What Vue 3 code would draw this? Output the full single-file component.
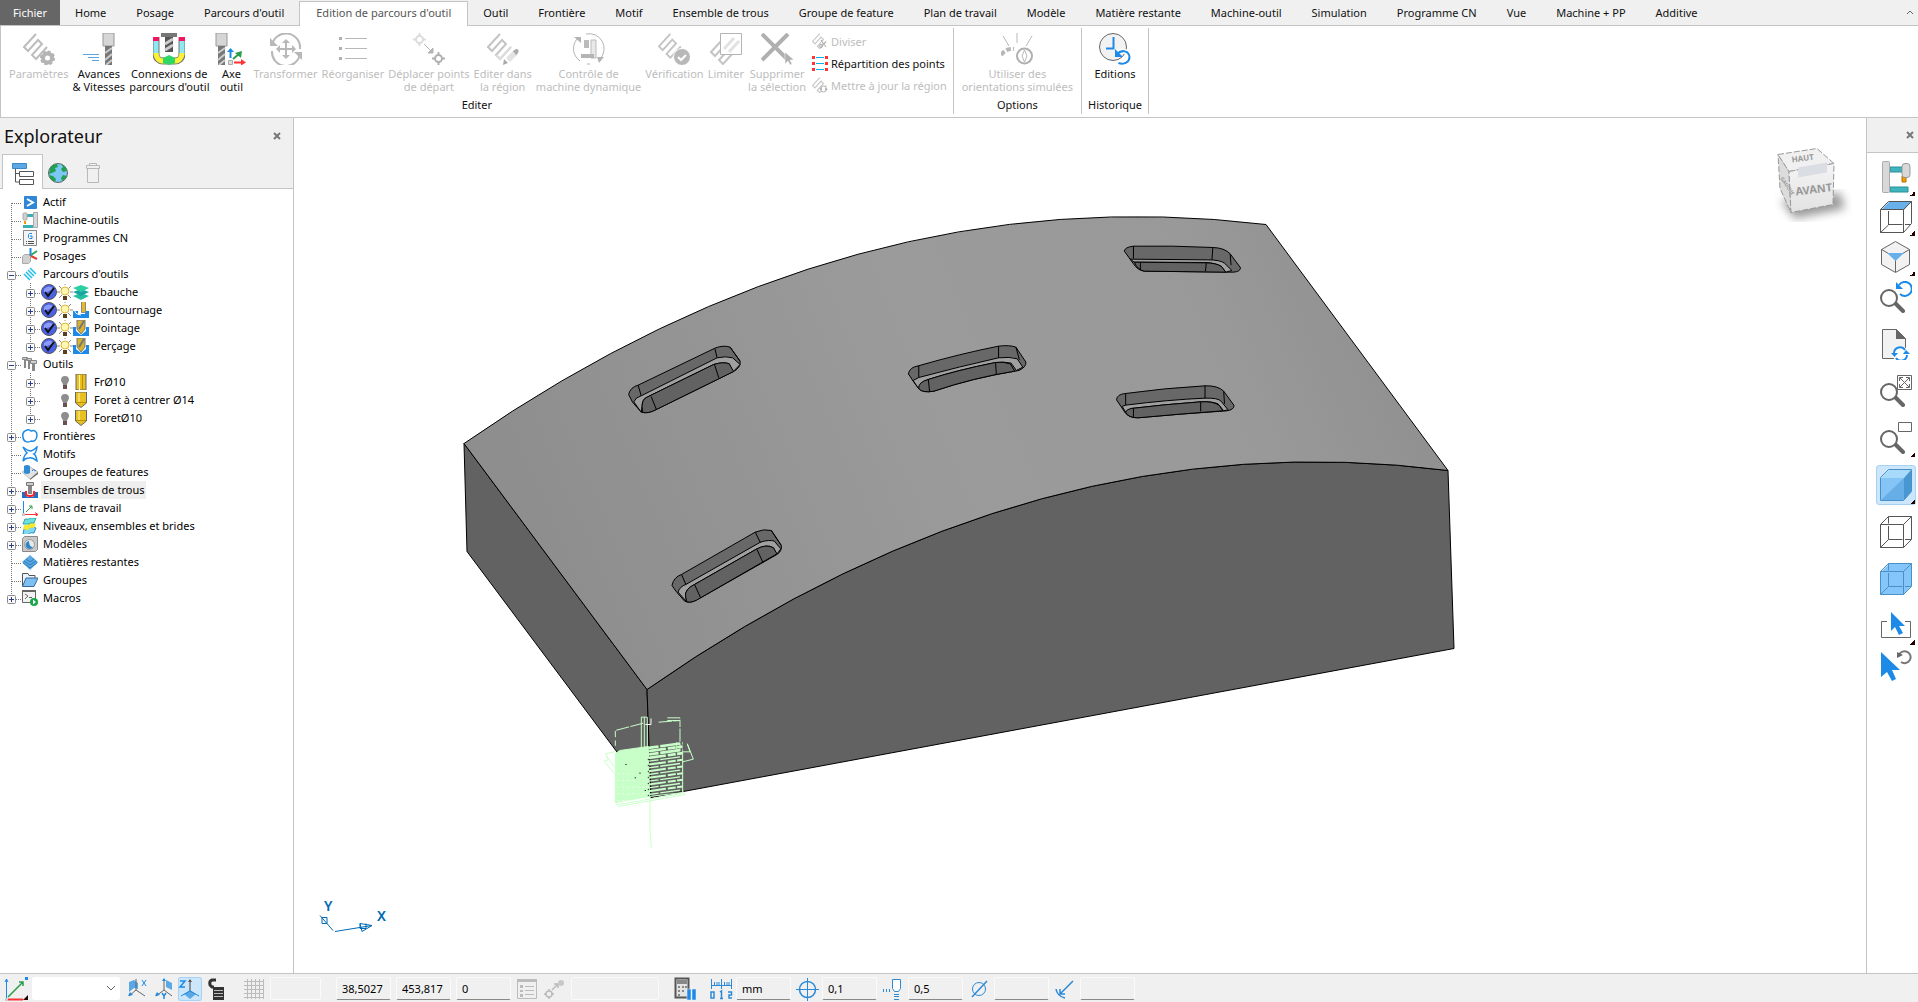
<script setup>
const snake = (c, o = '') => `<path d="M13 1L1 14l4 4L15 7l4 4L9 22l4 4L24 14" fill="none" stroke="${c}" stroke-width="2" ${o}/>`
const drill = x => `<path d="M${x} 0h11v13h-11z" fill="#d6d6d6" stroke="#999"/><path d="M${x + 2} 13h7v19h-7z" fill="#777"/><path d="M${x + 2} 20l7-5M${x + 2} 27l7-6M${x + 3} 32l6-5" stroke="#ccc" stroke-width="2"/>`

const ribbonIcons = {
  params: snake('#bdbdbd') + '<circle cx="24.5" cy="25" r="4.5" fill="none" stroke="#b4b4b4" stroke-width="4"/><circle cx="24.5" cy="25" r="6.5" fill="none" stroke="#b4b4b4" stroke-width="2" stroke-dasharray="3 2"/>',
  feeds: drill(20) + '<path d="M0 21.5h16M5 24.5h11M9 27.5h7" stroke="#5aa5e0"/>',
  links: '<path d="M3 4v17c0 4 3 7 7 7h12c4 0 7-3 7-7V4" fill="none" stroke="#777" stroke-width="7"/><path d="M3 4v17M29 4v17" stroke="#8ee8f2" stroke-width="5"/><path d="M3 20c0 5 3 8 8 8h10c5 0 8-3 8-8" fill="none" stroke="#fbf236" stroke-width="5"/><path d="M3 4v4M29 4v4" stroke="#f5145e" stroke-width="6"/><path d="M10 25l6-3 6 3v5l-6 2-6-2z" fill="#2fd767"/><path d="M8 0h16v4H8z" fill="#777"/><path d="M12 4h8v15h-8z" fill="#555"/><path d="M12 11l8-5M12 17l8-5" stroke="#ccc" stroke-width="3"/>',
  axis: drill(1) + '<path d="M15.5 25v-7" stroke="#1c8ae6" stroke-width="2"/><path d="M12 19l3.500-4 3.500 4z" fill="#1c8ae6"/><path d="M18 26l6-5" stroke="#2a9d4a" stroke-width="2"/><path d="M20 20l7-2-1 7z" fill="#2a9d4a"/><path d="M19 29.5h8" stroke="#f33" stroke-width="2"/><path d="M26 26l5 3.500-5 3z" fill="#f33"/><path d="M13.500 27.500h4v4h-4z" fill="#ddd" stroke="#aaa"/>',
  transform: '<path d="M2 13a14 14 0 0 1 28 3M30 20a14 14 0 0 1-28-2" fill="none" stroke="#b8b8b8" stroke-width="2"/><path d="M0 5v8h8zM32 27v-8h-8z" fill="#b8b8b8"/><path d="M16 8v16M8 16h16" stroke="#b8b8b8" stroke-width="2"/><path d="M12 10l4-4 4 4zM12 22l4 4 4-4zM10 12l-4 4 4 4zM22 12l4 4-4 4z" fill="#b8b8b8"/>',
  reorder: '<path d="M2 4h3v3H2zM2 14h3v3H2zM2 24h3v3H2z" fill="#b0b0b0"/><path d="M8 5.5h22M8 15.5h22M8 25.5h22" stroke="#b8b8b8"/>',
  start: '<g fill="none" stroke="#dcdcdc" stroke-width="2"><circle cx="6.5" cy="6.5" r="3.5"/><path d="M6.5 0v3M6.5 10v3M0 6.5h3M10 6.5h3"/></g><path d="M11 11l8 8M20 15v5h-5z" stroke="#b4b4b4" fill="#b4b4b4"/><g fill="none" stroke="#b0b0b0" stroke-width="2"><circle cx="25.5" cy="25.5" r="3.5"/><path d="M25.5 19v3M25.5 29v3M19 25.5h3M29 25.5h3"/></g>',
  region: snake('#c4c4c4') + '<path d="M9 22l4 4L24 14" fill="none" stroke="#ddd" stroke-width="2"/><path d="M19 25l8-8 4 4-8 8z" fill="#e2e2e2"/><path d="M17 26l4 4-5 2zM26 18l3-2c3 0 3 2 2 4l-2 2z" fill="#aaa"/>',
  machine: '<path d="M6 4A15 15 0 0 0 7 28M13 1a15 15 0 0 1 14 25M14 31h3" fill="none" stroke="#b4b4b4"/><path d="M1 4h7v6zM24 24l7 0-5 6z" fill="#b4b4b4"/><path d="M11 7h5v8h-5z" fill="#bbb"/><path d="M18 7h5v18h-5z" fill="#e8e8e8" stroke="#bbb"/><path d="M8 21h13v4H8z" fill="#b4b4b4"/>',
  verify: snake('#c4c4c4', 'transform="scale(.95)"') + '<circle cx="24" cy="24" r="8.5" fill="#b8b8b8" stroke="#fff"/><path d="M20 24l3 3 5-5" fill="none" stroke="#fff" stroke-width="2"/>',
  limit: '<g transform="translate(0 5)">' + snake('#c4c4c4') + '</g><path d="M10.5.5h21v21h-21z" fill="#fff" stroke="#b4b4b4"/><path d="M14 16L24 5M19 19l10-11" stroke="#e2e2e2" stroke-width="3"/>',
  remove: '<path d="M1 1l26 26M27 1L1 27" stroke="#b0b0b0" stroke-width="4"/><path d="M24 19v12l3-3 2 4 2-1-2-4h4z" fill="#b0b0b0" stroke="#fff" stroke-width=".5"/>',
  orient: '<path d="M2 3l6 10M16 0v10M31 3l-6 10" stroke="#b8b8b8"/><path d="M0 22q5-7 13-6" fill="none" stroke="#b8b8b8" stroke-width="4" stroke-dasharray="5 2"/><circle cx="23.5" cy="23" r="7.5" fill="none" stroke="#b0b0b0" stroke-width="2"/><path d="M23.5 17l2.500 6-2.500 6-2.500-6z" fill="none" stroke="#b8b8b8"/>',
  history: '<circle cx="14" cy="14" r="13.5" fill="#f2f2f2" stroke="#666"/><path d="M14.5 4v11.5H7" fill="none" stroke="#1c8ae6" stroke-width="2"/><path d="M18 21c5-5 12-3 12.500 3 0 5-5 8-11 6" fill="none" stroke="#fff" stroke-width="5"/><path d="M18 21c5-5 12-3 12.500 3 0 5-5 8-11 6" fill="none" stroke="#1c8ae6" stroke-width="2"/><path d="M16 16v8h8z" fill="#1c8ae6"/>',
}
const smallIcons = {
  split: `<g transform="scale(.6)">${snake('#c8c8c8')}</g><path d="M9 7l5 7M14 9l-5 3" stroke="#aaa"/><circle cx="9" cy="13" r="1.5" fill="none" stroke="#aaa"/>`,
  spread: '<path d="M0 1h3v3H0zM13 1h3v3h-3zM0 7h3v3H0zM13 7h3v3h-3zM0 13h3v3H0zM13 13h3v3h-3z" fill="#f33"/><path d="M4 2.5h8M4 8.5h8M4 14.5h8" stroke="#00b4e6"/>',
  update: `<g transform="scale(.6)">${snake('#c8c8c8')}</g><circle cx="11.5" cy="12" r="3" fill="#fff" stroke="#b4b4b4"/><path d="M7 12l3-2v3zM16 12l-3 2v-3z" fill="#b4b4b4"/>`,
}

const tabs = ['Fichier', 'Home', 'Posage', "Parcours d'outil", "Edition de parcours d'outil", 'Outil', 'Frontière', 'Motif', 'Ensemble de trous', 'Groupe de feature', 'Plan de travail', 'Modèle', 'Matière restante', 'Machine-outil', 'Simulation', 'Programme CN', 'Vue', 'Machine + PP', 'Additive']
const groups = [
  {
    name: 'Editer',
    tools: [
      { icon: 'params', text: ['Paramètres'], off: true },
      { icon: 'feeds', text: ['Avances', '& Vitesses'] },
      { icon: 'links', text: ['Connexions de', "parcours d'outil"] },
      { icon: 'axis', text: ['Axe', 'outil'] },
      { icon: 'transform', text: ['Transformer'], off: true },
      { icon: 'reorder', text: ['Réorganiser'], off: true },
      { icon: 'start', text: ['Déplacer points', 'de départ'], off: true },
      { icon: 'region', text: ['Editer dans', 'la région'], off: true },
      { icon: 'machine', text: ['Contrôle de', 'machine dynamique'], off: true },
      { icon: 'verify', text: ['Vérification'], off: true },
      { icon: 'limit', text: ['Limiter'], off: true },
      { icon: 'remove', text: ['Supprimer', 'la sélection'], off: true },
    ],
    rows: [
      { icon: 'split', text: 'Diviser', off: true },
      { icon: 'spread', text: 'Répartition des points' },
      { icon: 'update', text: 'Mettre à jour la région', off: true },
    ],
  },
  { name: 'Options', tools: [{ icon: 'orient', text: ['Utiliser des', 'orientations simulées'], off: true }] },
  { name: 'Historique', tools: [{ icon: 'history', text: ['Editions'] }] },
]

const treeIcons = {
  active: '<rect x="2" y="2" width="13" height="13" rx="1" fill="#2f86d6"/><path d="M5 5l6 3.500L5 12" fill="none" stroke="#fff" stroke-width="2"/>',
  machine: '<path d="M11.5.5h4v15h-4z" fill="#d8d8d8" stroke="#aaa"/><path d="M4 2h7v3H4zM1 13h10v3H1z" fill="#3aafb4"/><rect x="1" y="1" width="4" height="7" rx="1" fill="#d0d0d0" stroke="#aaa"/><path d="M2 9h2v3H2z" fill="#f0a000"/>',
  nc: '<path d="M1.500.5h13v15h-13z" fill="#f4f4f4" stroke="#888"/><path d="M10 3.500H7.500l-1 1v3l1 1H10V6H8" fill="none" stroke="#1c8ae6"/><path d="M4 11.500h1M6 11.500h6M4 13.500h1M6 13.500h6" stroke="#555"/>',
  setup: '<path d="M.5 8.500l2-2h6v7l-2 2h-6z" fill="#d0d0d0" stroke="#aaa"/><path d="M8.500 8V0" stroke="#1c8ae6" stroke-width="2"/><path d="M9 7l6-4" stroke="#2fa858" stroke-width="2"/><path d="M9 8l6 3" stroke="#e04030" stroke-width="2"/>',
  path: '<path d="M2 8l6 6M4 6l6 6M6 4l6 6M8 2l6 6" stroke="#22c0e8" stroke-width="1.500"/>',
  rough: '<path d="M0 12l8-3 8 3-8 4z" fill="#23c0a0"/><path d="M0 8l8-3 8 3-8 4z" fill="#1aa5a0"/><path d="M0 4l8-3 8 3-8 4z" fill="#2bd0a0"/>',
  contour: '<path d="M0 9h5v3h7V9h4v7H0z" fill="#1c8ae6"/><path d="M8.500-.5h4v11h-4z" fill="#e8b820" stroke="#888"/><path d="M2 8q-1 4 6 5" fill="none" stroke="#fff"/>',
  drillOp: '<path d="M0 7h3v4l5 4 5-4V7h3v9H0z" fill="#1c8ae6"/><path d="M4 0h8v9l-4 5-4-5z" fill="#d9b230" stroke="#777"/><path d="M6 9l5-8" stroke="#777" stroke-width="2"/>',
  tools: '<path d="M.5 1.500h5v2h-5zM4.500 2.500h5v2h-5zM8.500 4.500h6v3h-6z" fill="#d0d0d0" stroke="#888"/><path d="M2 4h2v8H2zM6 5h2v8H6zM10 8h3v7h-3z" fill="#888"/>',
  endmill: '<path d="M3 0h10v16H3z" fill="#e8c020" stroke="#666"/><path d="M6.500 1v15" stroke="#fff4b0"/><path d="M9.500 1v15" stroke="#b89000"/>',
  drillTool: '<path d="M2.500 0v11l5.500 4.500 5.500-4.500V0z" fill="#e8c020" stroke="#666"/><path d="M6 1v9" stroke="#fff4b0"/><path d="M3 10.500h10" stroke="#b89000"/>',
  boundary: '<path d="M5 2c2-1 3 0 4 1 3-1 6 0 6 4 0 5-3 7-6 6-3 2-8 1-8-4C0 5 2 3 5 2z" fill="none" stroke="#1c8ae6" stroke-width="1.500"/>',
  pattern: '<path d="M1 1q5 4 8 4 3-1 6-4-1 6-3 7 2 1 3 7-5-4-8-3-4 0-6 3 1-6 4-8Q3 5 1 1z" fill="none" stroke="#1c8ae6" stroke-width="1.500"/>',
  feature: '<path d="M0 8l8-5 8 5-8 7z" fill="#e2e2e2" stroke="#bbb"/><path d="M8 15l8-7v2l-8 6z" fill="#666"/><path d="M2 2q3-2 6 0v7q-3 2-6 0z" fill="#2f8cd4"/><path d="M10 7q1-3 4 0" fill="none" stroke="#1c70c0"/>',
  holes: '<path d="M0 10h3l2 5h6l2-5h3v6H0z" fill="#1c70c8"/><path d="M4 9v3q0 2 4 2t4-2V9" fill="none" stroke="#f22" stroke-width="2"/><path d="M4.500.5h7v3h-7z" fill="#ccc" stroke="#777"/><path d="M6 4h4v8H6z" fill="#888"/>',
  plane: '<path d="M1.500 13V1" stroke="#1c8ae6"/><path d="M4 12l6-6M7 6h3v3" fill="none" stroke="#2a9d4a"/><path d="M3 14.500h12M13 12.500l3 2-3 2" fill="none" stroke="#f33"/><path d="M0 13h3v3H0z" fill="#ccc"/>',
  levels: '<path d="M2 11q4 1 5-1t7 0l-2 5q-4-1-5 1t-6 0z" fill="#7fd8f0" stroke="#2f8cc4"/><path d="M2 7q4 1 5-1t7 0l-2 4q-4-1-5 1t-6 0z" fill="#f5e830"/><path d="M3 1q4 1 5-1h6l-2 5q-4-1-5 1H1z" fill="#6fe0e0" stroke="#2fa8a4"/>',
  model: '<path d="M.5 2.500l2-2h13v13l-2 2H.5z" fill="#c8c8c8" stroke="#888"/><circle cx="7.500" cy="8.500" r="5" fill="#e8e8e8" stroke="#999"/><path d="M7 5a4 4 0 1 0 4 6q-4 0-4-6z" fill="#2f86c4"/>',
  stock: '<path d="M0 8l8-7 8 7-8 8z" fill="#5aa8e4"/><path d="M1 9l7 5 7-5M2 7l6 4 6-4M4 5l4 3 4-3" fill="none" stroke="#2f78b8"/>',
  folder: '<path d="M.5 14V1.500H6l1 2h6V6" fill="#e8f4ff" stroke="#555"/><path d="M.5 14.500L4 6h12l-4 8.500z" fill="#7fc0f4" stroke="#3a6a94"/>',
  macro: '<path d="M.5.5h13v12H.5z" fill="#f2f2f2" stroke="#666"/><path d="M0 0h14v2H0z" fill="#666"/><path d="M3 4l3 2-3 3M7 7.500h3" fill="none" stroke="#666"/><circle cx="12" cy="12" r="4" fill="#14a848"/><path d="M11 9.500v5l3-2.500z" fill="#fff"/>',
}
const checkIcon = '<circle cx="8" cy="8" r="7.500" fill="#4a62e8" stroke="#555"/><path d="M3 5q5-5 10 0-4 2-10 4z" fill="#8c9cf8"/><path d="M4 8l3 4 6-8" fill="none" stroke="#111" stroke-width="2"/>'
const bulbOn = '<path d="M2 2l3 3M14 2l-3 3M0 8h3M13 8h3M2 14l3-3M14 14l-3-3M8 0v1" stroke="#888"/><circle cx="8" cy="7" r="4" fill="#fff6b0" stroke="#e0b840"/><path d="M6 12h4v4H6z" fill="#5a4020"/>'
const bulbOff = '<path d="M8 2c3 0 4 2 4 4s-2 3-2 5H6c0-2-2-3-2-5s1-4 4-4z" fill="#8e8e8e"/><path d="M6 11h4v4H6z" fill="#6a5050"/>'

const tree = [
  { t: 'Actif', i: 'active' },
  { t: 'Machine-outils', i: 'machine' },
  { t: 'Programmes CN', i: 'nc' },
  { t: 'Posages', i: 'setup' },
  { t: "Parcours d'outils", i: 'path', box: '-' },
  { t: 'Ebauche', i: 'rough', child: true, check: true },
  { t: 'Contournage', i: 'contour', child: true, check: true },
  { t: 'Pointage', i: 'drillOp', child: true, check: true },
  { t: 'Perçage', i: 'drillOp', child: true, check: true, last: true },
  { t: 'Outils', i: 'tools', box: '-' },
  { t: 'FrØ10', i: 'endmill', child: true },
  { t: 'Foret à centrer Ø14', i: 'drillTool', child: true },
  { t: 'ForetØ10', i: 'drillTool', child: true, last: true },
  { t: 'Frontières', i: 'boundary', box: '+' },
  { t: 'Motifs', i: 'pattern' },
  { t: 'Groupes de features', i: 'feature' },
  { t: 'Ensembles de trous', i: 'holes', box: '+', sel: true },
  { t: 'Plans de travail', i: 'plane', box: '+' },
  { t: 'Niveaux, ensembles et brides', i: 'levels', box: '+' },
  { t: 'Modèles', i: 'model', box: '+' },
  { t: 'Matières restantes', i: 'stock' },
  { t: 'Groupes', i: 'folder' },
  { t: 'Macros', i: 'macro', box: '+' },
]

// Dotted guide lines and the expand box in front of a tree row.
function gutter(row, n) {
  const dots = 'stroke="#777" stroke-dasharray="1 1"'
  const box = (x, sign) => `<rect x="${x - 3.5}" y="6.5" width="8" height="8" rx="1" fill="#fafafa" stroke="#8a8a8a"/><path d="M${x - 2} 10.5h5${sign === '+' ? `M${x + 0.5} 8v5` : ''}" stroke="#28408c"/>`
  const from = n === 0 ? 10 : 0
  const to = n === tree.length - 1 ? 10 : 18
  let s = `<path d="M11.5 ${from}V${to}" ${dots}/>`
  if (row.child) s += `<path d="M30.5 0v${row.last ? 10 : 18}M31 10.5h10" ${dots}/>` + box(30, '+')
  else s += `<path d="M12 10.5h10" ${dots}/>` + (row.box ? box(11, row.box) : '')
  return s
}

const mag = '<path d="M15 22l8 8" stroke="#666" stroke-width="4" stroke-linecap="round"/><circle cx="9" cy="17" r="8" fill="#fff" stroke="#666" stroke-width="2"/>'
const cubeEdges = c => `<path d="M.5 8.500h23v23H.5zM.5 8.500l8-8h23v23l-8 8M23.500 8.500l8-8M8.500.5v7M8.500 10v13.500M8.500 23.500l-8 8M8.500 23.500h14M25 23.500h6" fill="none" stroke="${c}"/>`
const viewTools = [
  { n: 'Machine', m: 1, s: '<path d="M10 6h12v5H10zM10 26h18v5H10z" fill="#3fb4bc" stroke="#2a9098"/><path d="M22 15h4v6h-4z" fill="#f0a000" stroke="#b07000"/><rect x="2.500" y=".5" width="7" height="31" rx="1" fill="#d8d8d8" stroke="#aaa"/><rect x="22" y="2.500" width="8" height="14" rx="3" fill="#d8d8d8" stroke="#999"/>' },
  { n: 'Vue de dessus', m: 1, s: '<path d="M1 9L9 1h22l-7 8z" fill="#69b0ea"/><path d="M.5 8.500h23v23H.5zM.5 8.500l8-8h23v22l-8 9M23.500 8.500l8-8M8.500 10v14M8.500 24l-8 7.500M8.500 23.500h14M25 23.500h6" fill="none" stroke="#555"/>' },
  { n: 'Vue isométrique', m: 1, s: '<path d="M15.500.5l14 8v15l-14 8-14-8v-15z" fill="#f2f2f2" stroke="#666"/><path d="M1.500 8.500l14 8 14-8M15.500 16v15" fill="none" stroke="#666"/><path d="M7 12h17l-8.500 8z" fill="#69b0ea"/>' },
  { n: 'Zoom précédent', gap: 1, s: mag + '<path d="M19 4a7 7 0 1 1 1 9" fill="none" stroke="#1c8ae6" stroke-width="2"/><path d="M16 1v7h7z" fill="#1c8ae6"/>' },
  { n: 'Rafraîchir', gap: 1, s: '<path d="M2.500 1.500h14l9 9v20h-23z" fill="#f2f2f2" stroke="#666"/><path d="M16 1v10h10z" fill="#666"/><circle cx="20.500" cy="26" r="8" fill="#fff"/><path d="M14 25a6 6 0 0 1 11-3M27 27a6 6 0 0 1-11 3" fill="none" stroke="#1c8ae6" stroke-width="2"/><path d="M11 25h7l-3.500 4zM23 26h7l-4-4z" fill="#1c8ae6"/>' },
  { n: 'Zoom tout', gap: 1, s: mag + '<path d="M17.500.5h14v14h-14z" fill="#fff" stroke="#666"/><path d="M20 3l9 9M29 3l-9 9M19.500 6V2.500H23M26 2.500h3.500V6M29.500 9v3.500H26M23 12.500h-3.500V9" fill="none" stroke="#666"/>' },
  { n: 'Zoom fenêtre', m: 1, gap: 1, s: mag + '<path d="M18.500.5h13v9h-13z" fill="#fff" stroke="#666"/>' },
  { n: 'Ombrage', m: 1, on: 1, gap: 1, s: '<path d="M1 9L9 1h22l-7 8z" fill="#a8dafc"/><path d="M24 9l7-8v22l-7 8z" fill="#4896d2"/><path d="M1 9h23v22H1z" fill="#84c4f6"/><path d="M24 9v22H1z" fill="#68aee6"/><path d="M.5 8.500l8-8h23v22l-8 9H.5z" fill="none" stroke="#4a90c8"/>' },
  { n: 'Filaire', gap: 1, s: cubeEdges('#555') },
  { n: 'Transparent', gap: 1, s: '<path d="M1 9l8-8h22v22l-7 8H1z" fill="#84c6fa"/>' + cubeEdges('#4a90c8') },
  { n: 'Sélection par boîte', m: 1, s: '<path d="M7 11.500H1.500v16h29v-16H25" fill="none" stroke="#666"/><path d="M11 2v19l4-4 4 8 4-2-4-7h6z" fill="#1c8ae6"/>' },
  { n: 'Annuler la sélection', s: '<path d="M1 2v25l6-5 5 9 4-2-4-9h8z" fill="#1c8ae6"/><path d="M19 5a6 6 0 1 1 2 7" fill="none" stroke="#777" stroke-width="2"/><path d="M17 2v6l6-3z" fill="#666"/>' },
]

const st = {
  wp: '<path d="M2.500 21V3M1 5l1.500-3L4 5" fill="none" stroke="#1c8ae6"/><path d="M4 20L19 5M15 5h4v4" fill="none" stroke="#2a9d4a" stroke-width="1.500"/><path d="M4 22.500h15" stroke="#f33" stroke-width="2"/><path d="M1 21h3v3H1z" fill="#ccc"/><path d="M21 0h3v3h-3z" fill="#1c8ae6"/><path d="M24 18v5h-5z" fill="#200"/>',
  x: '<path d="M3 5l5-2v8l-5 4zM8 3l4 3v6l-4-1z" fill="#5ba8e4"/><path d="M10 13V2M10 13l-7 6M10 13l9 6" stroke="#666" fill="none"/><path d="M2 19l5-1-3-3z" fill="#1c8ae6"/><path d="M16 3l4 6M20 3l-4 6" stroke="#1c8ae6"/>',
  y: '<path d="M14 3l6 3v7l-6-3z" fill="#5ba8e4"/><path d="M12 13V2M12 13l-8 6M12 13l8 6" stroke="#666" fill="none"/><path d="M3 19l5-1-3-3zM10 4l2-3 2 3z" fill="#1c8ae6"/><path d="M10 16l2 3 2-3M12 19v3" fill="none" stroke="#1c8ae6" stroke-width="1.500"/>',
  z: '<path d="M12 14V3" stroke="#777" stroke-width="1.500"/><path d="M6 17l6-4 6 4-6 5z" fill="#5ba8e4"/><path d="M12 14l-9 5M12 14l9 5" stroke="#1c8ae6"/><path d="M10 5l2-3 2 3z" fill="#555"/><path d="M2 4h5L2 10h5" fill="none" stroke="#1c8ae6" stroke-width="1.500"/>',
  lock: '<path d="M12 3H8Q5 4 6 8l2 2h2" fill="none" stroke="#333" stroke-width="3"/><path d="M9 10h11v13H9z" fill="#333"/><path d="M10 13.500h9M10 16.500h9M10 19.500h9" stroke="#bbb"/>',
  grid: '<path d="M2 4.500h20M2 8.500h20M2 12.500h20M2 16.500h20M2 20.500h20M5.500 2v20M9.500 2v20M13.500 2v20M17.500 2v20M21.500 2v20" stroke="#bbb"/>',
  list: '<path d="M2.500 2.500h19v19h-19z" fill="none" stroke="#bbb"/><path d="M2 2h20v3H2zM10 9h9v1h-9zM10 13h9v1h-9zM10 17h9v1h-9zM5 8h3v3H5zM5 13h3v2H5zM5 17h3v3H5z" fill="#bbb"/>',
  pt: '<circle cx="6" cy="17" r="3" fill="none" stroke="#bbb" stroke-width="1.500"/><path d="M6 12v2M6 20v2M1 17h2M9 17h2M9 13l5-5M11 7h4v4" fill="none" stroke="#bbb" stroke-width="1.500"/><circle cx="18" cy="6" r="3" fill="#c8c8c8"/>',
  calc: '<path d="M2.500 1.500h13v19h-13z" fill="#e4e4e4" stroke="#555" stroke-width="2"/><path d="M4 3h10v4H4z" fill="#888"/><path d="M5 9h2v2H5zM9 9h2v2H9zM5 13h2v2H5zM9 13h2v2H9zM5 17h2v2H5zM12 9h2v2h-2z" fill="#888"/><path d="M14 12h4v11h-4zM19 12h4v11h-4z" fill="#1c8ae6" stroke="#f0f0f0" stroke-width=".5"/>',
  ruler: '<path d="M2.500 2v10M12.500 2v10M22.500 2v10M5.500 5v4M8 5v4M10 5v4M15.500 5v4M18 5v4M20 5v4M2 8.500h20" stroke="#2a8ad8"/><path d="M2 15h3v6H2zM11 15l1.500-1v8M11 21.500h3M19 15h3.500v3H20v3h3" fill="none" stroke="#2a8ad8" stroke-width="1.500"/>',
  cross: '<circle cx="12.500" cy="12.500" r="8" fill="none" stroke="#2a8ad8" stroke-width="1.500"/><path d="M12.500 1v23M1 12.500h23" stroke="#2a8ad8"/>',
  thick: '<path d="M11.500 2.500h8v9l-2 3h-4l-2-3z" fill="#fff" stroke="#2a8ad8"/><path d="M13 17.500h5M13 19.500h5M13 22.500h5M2.500 12v3M5.500 12v3M8.500 12v3" stroke="#2a8ad8"/>',
  dia: '<circle cx="12" cy="12" r="6.500" fill="none" stroke="#2a8ad8"/><path d="M5 20L20 4" stroke="#2a8ad8" stroke-width="1.500"/>',
  rad: '<path d="M3 12q1 7 9 9" fill="none" stroke="#2a8ad8" stroke-width="1.500"/><path d="M7 17L20 4M7 12v5h5" fill="none" stroke="#2a8ad8" stroke-width="1.500"/>',
}
const tolerances = [
  { icon: 'ruler', n: 'Unités', v: 'mm' },
  { icon: 'cross', n: 'Tolérance', v: '0,1' },
  { icon: 'thick', n: 'Surépaisseur', v: '0,5' },
  { icon: 'dia', n: 'Diamètre', v: '' },
  { icon: 'rad', n: 'Rayon de bec', v: '' },
]

// Pockets of the part: outline, ledge, floor opening, wall edges.
const slots = [
  { o: 'M66 492Q70 470 88 464L265 353Q285 343 300 350L323 392Q326 412 305 425L130 537Q110 551 95 545L75 515Z', l: 'M78 514Q82 500 95 496L270 382Q290 376 306 382L323 402L306 425L298 400Q285 393 262 402L110 499Q97 505 97 528L95 545Z', h: 'M97 528Q97 505 110 499L262 402Q285 393 298 400L308 423L130 537Q110 551 98 545Z', e: 'M88 464L95 496M265 355L270 382M300 350L323 392M118 498L130 537M264 402L274 442' },
  { o: 'M166 1065Q170 1040 188 1032L358 905Q378 894 395 900L418 945Q420 962 408 972L232 1102Q208 1122 195 1112L175 1082Z', l: 'M180 1085Q184 1068 198 1062L370 935Q390 927 402 932L417 955L407 972L400 952Q384 940 362 955L218 1062Q197 1075 197 1095L200 1114Z', h: 'M197 1095Q197 1075 218 1062L362 955Q384 940 400 952L408 970L232 1102Q212 1119 200 1114Z', e: 'M188 1032L198 1062M358 905L370 937M395 900L418 945M218 1062L232 1102M362 957L376 997' },
  { o: 'M711 430Q714 410 734 406Q830 370 919 347Q945 343 959 350L982 395Q983 410 966 420Q860 442 770 482Q745 488 735 475L722 452Z', l: 'M722 450L735 441Q830 408 919 382Q945 378 962 385L975 410L960 420L948 398Q930 393 912 396Q820 420 757 447Q736 455 735 475Z', h: 'M735 475Q733 455 757 447Q820 420 912 396Q930 393 946 400L956 422Q860 442 770 482Q745 488 735 475Z', e: 'M735 406V440M919 347V382M959 350L967 388M757 447L760 484M912 396L914 434' },
  { o: 'M1191 508Q1192 491 1212 489Q1300 473 1395 466Q1425 465 1438 482L1462 525Q1462 538 1445 541Q1340 550 1240 562Q1218 562 1210 545Z', l: 'M1204 528L1212 524Q1310 508 1395 503Q1425 502 1432 512L1448 538L1438 541L1425 520Q1410 512 1385 514Q1300 522 1225 534L1212 545Z', h: 'M1212 545Q1214 536 1225 534Q1300 522 1385 514Q1415 512 1428 525L1436 541Q1340 550 1240 562Q1218 562 1212 545Z', e: 'M1212 489V524M1395 466V503M1438 482L1440 520M1230 534V562M1385 514V543' },
  { o: 'M1209 62Q1210 50 1230 47Q1320 45 1413 51Q1440 52 1453 70L1477 112Q1476 124 1460 125L1255 122Q1240 120 1230 100Z', l: 'M1222 86L1400 88Q1430 88 1440 98L1457 120L1443 125L1432 107Q1420 98 1398 96L1232 95Z', h: 'M1232 95L1398 97Q1420 98 1432 107L1443 125L1255 122Q1240 118 1232 95Z', e: 'M1230 47V84M1413 51L1411 88M1453 70L1455 104M1246 96V118M1398 97L1396 122' },
]
const hatch = Array.from({ length: 15 }, (_, i) => ({ y: 172 + i * 10, w: i < 4 ? 8 : i % 2 ? 6 : 4, d: i % 2 ? '52 6 24 4' : '30 5 60 6' }))
</script>

<template>
  <div class="app">
    <nav class="tabs">
      <button v-for="(t, i) in tabs" :key="t" :class="{ file: i === 0, on: i === 4 }">{{ t }}</button>
      <button class="fold" aria-label="Réduire le ruban"><svg width="8" height="5" viewBox="0 0 8 5"><path d="M1 4l3-3 3 3" fill="none" stroke="#666" /></svg></button>
    </nav>

    <header class="ribbon">
      <section v-for="g in groups" :key="g.name" class="group">
        <div class="tools">
          <button v-for="t in g.tools" :key="t.icon" class="tool" :disabled="t.off">
            <svg width="32" height="32" viewBox="0 0 32 32" v-html="ribbonIcons[t.icon]" />
            <span v-for="l in t.text" :key="l">{{ l }}</span>
          </button>
          <div v-if="g.rows" class="stack">
            <button v-for="r in g.rows" :key="r.icon" :disabled="r.off">
              <svg width="16" height="16" viewBox="0 0 16 16" v-html="smallIcons[r.icon]" />{{ r.text }}
            </button>
          </div>
        </div>
        <h2>{{ g.name }}</h2>
      </section>
    </header>

    <div class="body">
      <aside class="explorer">
        <div class="title">
          <h1>Explorateur</h1>
          <button aria-label="Fermer"><svg width="8" height="8" viewBox="0 0 8 8"><path d="M1 1l6 6M7 1L1 7" stroke="#777" stroke-width="2" /></svg></button>
        </div>
        <div class="panes">
          <button class="on" aria-label="Arborescence">
            <svg width="24" height="24" viewBox="0 0 24 24"><path d="M1.500 1.500h14v5h-14z" fill="#5ba8e4" stroke="#3a88c8" /><path d="M4.500 7v13H8M4.500 11.500H8" fill="none" stroke="#555" /><path d="M8.500 9.500h14v5h-14zM8.500 17.500h14v5h-14z" fill="#fff" stroke="#555" /></svg>
          </button>
          <button aria-label="Internet">
            <svg width="24" height="24" viewBox="0 0 24 24"><circle cx="12" cy="12" r="9.500" fill="#7cc8f4" stroke="#666" /><path d="M4 7q3-4 7-4l1 3-3 1 1 3-4 2-3 1zM15 3q5 2 6 7l-4 1-2-3 2-2zM17 14l4 1q-2 4-5 5l-1-3zM3 14l4 1 3 3-1 3q-5-2-6-7z" fill="#22a050" /></svg>
          </button>
          <button aria-label="Corbeille">
            <svg width="24" height="24" viewBox="0 0 24 24"><path d="M6.500 7.500h11v14h-11zM5.500 4.500h13v3h-13zM8.500 4.500v-2h7v2" fill="none" stroke="#b8b8b8" /></svg>
          </button>
        </div>
        <div class="tree">
          <div v-for="(r, n) in tree" :key="n" class="row">
            <svg :width="r.child ? 41 : 22" height="18" v-html="gutter(r, n)" />
            <template v-if="r.child">
              <svg width="16" height="16" viewBox="0 0 16 16" v-html="r.check ? checkIcon : ''" />
              <svg width="16" height="16" viewBox="0 0 16 16" v-html="r.check ? bulbOn : bulbOff" />
            </template>
            <svg width="16" height="16" viewBox="0 0 16 16" v-html="treeIcons[r.i]" />
            <span :class="{ sel: r.sel }">{{ r.t }}</span>
          </div>
        </div>
      </aside>

      <main class="canvas">
        <svg viewBox="294 118 1572 854" preserveAspectRatio="xMidYMid meet">
          <defs>
            <linearGradient id="top" x1="0" y1=".3" x2="1" y2=".1">
              <stop offset="0" stop-color="#8e8e8e" /><stop offset=".45" stop-color="#9b9b9b" /><stop offset=".75" stop-color="#999" /><stop offset="1" stop-color="#8c8c8c" />
            </linearGradient>
            <linearGradient id="cube" x1="0" y1="0" x2="0" y2="1"><stop offset="0" stop-color="#f4f4f4" /><stop offset="1" stop-color="#e2e2e2" /></linearGradient>
            <filter id="soft"><feGaussianBlur stdDeviation="5" /></filter>
          </defs>
          <g stroke="#000" stroke-linejoin="round">
            <path d="M464 443L467 551L651 797L647 689Z" fill="#626262" />
            <path d="M647 689Q1036 417 1448 470L1454 648L651 797Z" fill="#626262" />
            <path d="M464 443Q851 174 1266 224L1448 470Q1036 417 647 689Z" fill="url(#top)" />
          </g>
          <g transform="translate(600 230) scale(.4337 .3333)" stroke="#000">
            <g v-for="(s, i) in slots" :key="i">
              <path class="thin" :d="s.o" fill="#686868" />
              <path class="thin" :d="s.l" fill="#a0a0a0" />
              <path class="thin" :d="s.h" fill="#626262" />
              <path class="thin" :d="s.e" fill="none" />
            </g>
          </g>
          <g transform="translate(580 690) scale(.3333)" stroke="#c8ffc8" stroke-width="3" fill="none">
            <path d="M106 190L120 180 205 168 208 318 106 336Z" fill="#c8ffc8" />
            <path v-for="h in hatch" :key="h.y" :d="`M206 ${h.y}L308 ${h.y - 14}`" :stroke-width="h.w" :stroke-dasharray="h.d" />
            <path d="M190 98L106 120V140M106 150V166M236 95L300 90V182M262 82H300V90H262" stroke-dasharray="40 4" />
            <path d="M184 170V80H202V170M193 80V170M290 155V185M308 182V306L208 318" />
            <path d="M106 183L78 190 85 208 72 212 104 250M78 195L104 230M308 184H330L322 160 340 206 308 214M104 332L116 348 316 312 308 302M116 342L308 308M210 320V410L214 472" />
            <path d="M213 84V102H196" stroke="#fff" />
            <path d="M112 330H206M112 310H206M112 290H206M112 270H170M112 250H160" stroke="#fff" stroke-width="2" stroke-dasharray="6 9" />
            <path d="M205 205V318M136 222h5M164 262h4M178 248h6M194 300h5" stroke="#222" stroke-dasharray="4 14" />
          </g>
          <path d="M335 931L372 925M333 930L320 915M322 917h5v6h-5zM360 923l12 2-10 6zM360 923v5h6v-5" fill="none" stroke="#006ab4" />
          <g fill="#006ab4" class="axis"><text x="324" y="910">Y</text><text x="377" y="920">X</text></g>
          <path d="M1781 200l14 18 50-10-5-16z" fill="#999" filter="url(#soft)" />
          <g stroke="#999" stroke-dasharray="6 2">
            <path d="M1778 154L1789 171 1791 212 1780 188Z" fill="#dcdcdc" />
            <path d="M1778 154L1817 148 1834 163 1789 171Z" fill="#f0f0f0" />
            <path d="M1789 171L1834 163 1833 204 1791 212Z" fill="url(#cube)" />
          </g>
          <path d="M1798 167L1827 162V172L1798 177Z" fill="#dadde4" />
          <g class="cube" fill="#999">
            <text x="1796" y="195" transform="rotate(-7 1796 195)">AVANT</text>
            <text class="haut" x="1792" y="162" transform="rotate(-7 1792 162)">HAUT</text>
            <text class="side" x="1780" y="178" transform="rotate(55 1780 178)">GAUCHE</text>
          </g>
        </svg>
      </main>

      <aside class="views">
        <div class="close"><button aria-label="Fermer"><svg width="8" height="8" viewBox="0 0 8 8"><path d="M1 1l6 6M7 1L1 7" stroke="#777" stroke-width="2" /></svg></button></div>
        <button v-for="v in viewTools" :key="v.n" :aria-label="v.n" class="view" :class="{ on: v.on, gap: v.gap, more: v.m }">
          <svg width="32" height="32" viewBox="0 0 32 32" v-html="v.s" />
        </button>
      </aside>
    </div>

    <footer class="status">
      <button aria-label="Plan de travail"><svg width="24" height="24" v-html="st.wp" /></button>
      <select class="wide" aria-label="Plan de travail actif"><option></option></select>
      <div class="planes">
        <button aria-label="Plan X"><svg width="24" height="24" v-html="st.x" /></button>
        <button aria-label="Plan Y"><svg width="24" height="24" v-html="st.y" /></button>
        <button aria-label="Plan Z" class="on"><svg width="24" height="24" v-html="st.z" /></button>
        <button aria-label="Verrouiller"><svg width="24" height="24" v-html="st.lock" /></button>
      </div>
      <div class="pair">
        <button aria-label="Grille" disabled><svg width="24" height="24" v-html="st.grid" /></button>
        <input class="grid" aria-label="Pas de grille" disabled>
      </div>
      <div class="coords">
        <input aria-label="X" value="38,5027"><input aria-label="Y" value="453,817"><input aria-label="Z" value="0">
      </div>
      <div class="pair">
        <button aria-label="Position" disabled><svg width="24" height="24" v-html="st.list" /></button>
        <button aria-label="Point" disabled><svg width="24" height="24" v-html="st.pt" /></button>
        <input class="wide" aria-label="Longueur" disabled>
      </div>
      <button class="calc" aria-label="Calculatrice"><svg width="24" height="24" v-html="st.calc" /></button>
      <label v-for="t in tolerances" :key="t.icon" class="tol">
        <svg width="24" height="24" v-html="st[t.icon]" />
        <input :aria-label="t.n" :value="t.v">
      </label>
    </footer>
  </div>
</template>

<style>
body { margin: 0; overflow: hidden; }
</style>

<style scoped>
.app { height: 100vh; display: flex; flex-direction: column; background: #fff; color: #111; font: 11px/13px "Noto Sans", "Open Sans", sans-serif; }
svg { display: block; flex: none; }
button { margin: 0; padding: 0; border: 0; background: none; color: inherit; font: inherit; white-space: nowrap; }
h1, h2 { margin: 0; font-weight: 400; }

.tabs { display: flex; height: 25px; flex: none; background: #f0f0f0; border-bottom: 1px solid #c4c4c4; }
.tabs button { padding: 0 15px; }
.tabs .file { width: 60px; padding: 0; background: #666; color: #fff; }
.tabs .on { height: 25px; margin-top: 1px; padding: 0 16px 3px; background: #fff; border: 1px solid #c4c4c4; border-bottom: 0; color: #555; }
.tabs .fold { margin-left: auto; padding: 0 4px; }

.ribbon { display: flex; height: 92px; flex: none; border-bottom: 1px solid #c4c4c4; border-left: 1px solid #c4c4c4; box-sizing: border-box; }
.group { display: flex; flex-direction: column; justify-content: space-between; margin: 2px 0 3px; padding: 5px 6px 3px; border-right: 1px solid #c4c4c4; }
.group h2 { font-size: 11px; text-align: center; }
.tools { display: flex; align-items: flex-start; justify-content: center; }
.tool { min-width: 40px; padding: 0 2px; display: flex; flex-direction: column; align-items: center; }
.tool svg { margin-bottom: 2px; }
.ribbon button:disabled { color: #bdbdbd; }
.stack { display: flex; flex-direction: column; gap: 6px; padding-left: 4px; }
.stack button { display: flex; align-items: center; gap: 3px; height: 16px; }

.body { flex: 1; min-height: 0; display: flex; }
.explorer { width: 293px; flex: none; border-right: 1px solid #c4c4c4; display: flex; flex-direction: column; }
.title { display: flex; align-items: center; justify-content: space-between; height: 36px; padding: 0 12px 0 4px; background: #f0f0f0; }
.title h1 { font-size: 18px; line-height: 24px; }
.panes { display: flex; height: 34px; background: #f0f0f0; border-bottom: 1px solid #c4c4c4; padding-left: 2px; }
.panes button { width: 30px; margin-right: 5px; padding-top: 4px; display: flex; align-items: center; justify-content: center; }
.panes .on { width: 41px; height: 35px; margin-right: 0; box-sizing: border-box; background: #fff; border: 1px solid #c4c4c4; border-bottom: 0; }
.tree { padding-top: 4px; }
.row { display: flex; align-items: center; height: 18px; color: #000; }
.row span { margin-left: 3px; padding: 0 2px; line-height: 18px; white-space: nowrap; }
.row .sel { background: #eee; }

.canvas { flex: 1; min-width: 0; }
.canvas svg { width: 100%; height: 100%; }
.thin { vector-effect: non-scaling-stroke; }
.axis { font-size: 14px; font-weight: 600; }
.cube { font-size: 11px; font-weight: 700; }
.haut { font-size: 8px; }
.side { font-size: 5px; }

.views { width: 51px; flex: none; border-left: 1px solid #c4c4c4; }
.close { height: 34px; margin-bottom: 4px; background: #f0f0f0; border-bottom: 1px solid #c4c4c4; display: flex; align-items: center; justify-content: flex-end; padding-right: 4px; }
.view { position: relative; width: 40px; height: 40px; margin-left: 9px; display: flex; align-items: center; justify-content: center; box-sizing: border-box; border: 1px solid transparent; border-radius: 3px; }
.view.gap { margin-bottom: 7px; }
.view.on { background: #cce6fc; border-color: #a8d2f4; }
.view.more::after { content: ""; position: absolute; right: 0; bottom: 0; width: 5px; height: 5px; background: linear-gradient(135deg, transparent 50%, #200 50%); }

.status { height: 29px; flex: none; box-sizing: border-box; display: flex; align-items: center; gap: 4px; padding: 1px 4px 0; background: #f0f0f0; border-top: 1px solid #c4c4c4; }
.status input, .status select { box-sizing: border-box; width: 55px; height: 23px; padding: 0 5px; border: 1px solid #fafafa; border-bottom: 1px solid #888; border-radius: 2px; background: #f0f0f0; font: inherit; color: #000; }
.status input:disabled { border-color: #fafafa; }
.status .wide { width: 88px; }
.status .grid { width: 51px; }
.status select { appearance: none; border-color: #fff; background: #fff url("data:image/svg+xml,%3Csvg xmlns='http://www.w3.org/2000/svg' width='8' height='5'%3E%3Cpath d='M0 0l4 4 4-4' fill='none' stroke='%23666'/%3E%3C/svg%3E") no-repeat right 4px center; }
.planes { display: flex; gap: 2px; margin-left: 2px; }
.planes .on { background: #cce6fc; border-radius: 3px; box-shadow: 0 0 0 1px #a8d2f4 inset; }
.pair, .coords { display: flex; align-items: center; gap: 4px; }
.pair { margin-left: 10px; }
.coords { gap: 5px; margin-left: 11px; }
.coords + .pair { margin-left: 0; }
.calc { margin-left: 10px; }
.calc + .tol { margin-left: 8px; }
.tol { display: flex; align-items: center; gap: 3px; }
</style>
